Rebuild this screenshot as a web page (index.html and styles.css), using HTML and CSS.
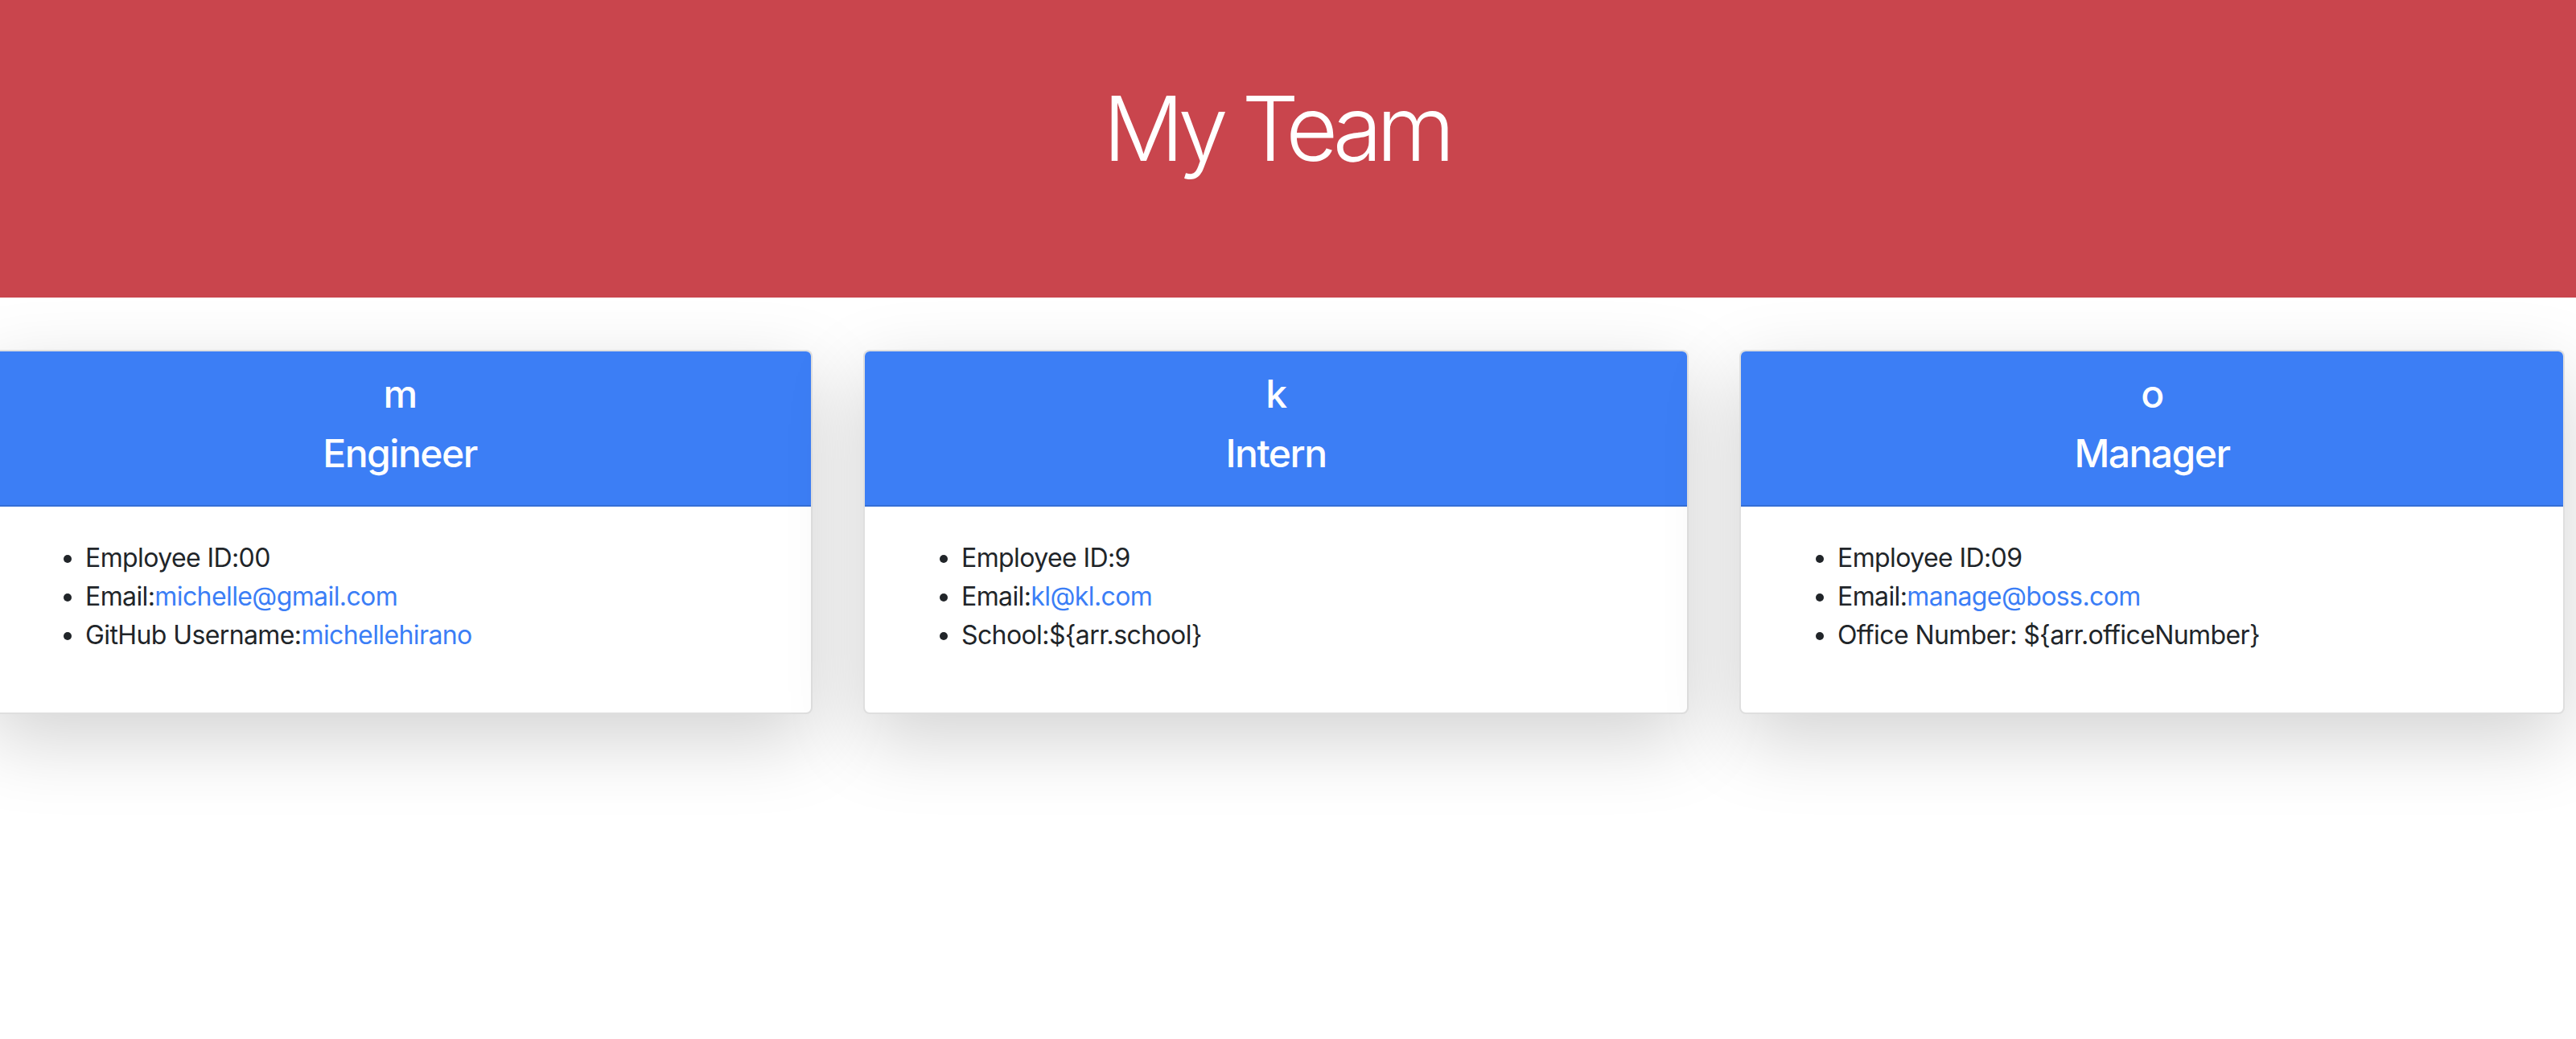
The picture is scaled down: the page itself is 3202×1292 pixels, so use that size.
FILE: index.html
```html
<!DOCTYPE html>
<html lang="en">
<head>
<meta charset="utf-8">
<title>My Team</title>
<link rel="stylesheet" href="styles.css">
</head>
<body>
<header class="jumbotron">
  <h1 class="title">My Team</h1>
</header>
<main class="team">
  <section class="card">
    <div class="card-header">
      <h4 class="name">m</h4>
      <h4 class="role">Engineer</h4>
    </div>
    <div class="card-body">
      <ul class="info">
        <li>Employee ID:00</li>
        <li>Email:<a href="#">michelle@gmail.com</a></li>
        <li>GitHub Username:<a href="#">michellehirano</a></li>
      </ul>
    </div>
  </section>
  <section class="card">
    <div class="card-header">
      <h4 class="name">k</h4>
      <h4 class="role">Intern</h4>
    </div>
    <div class="card-body">
      <ul class="info">
        <li>Employee ID:9</li>
        <li>Email:<a href="#">kl@kl.com</a></li>
        <li>School:${arr.school}</li>
      </ul>
    </div>
  </section>
  <section class="card">
    <div class="card-header">
      <h4 class="name">o</h4>
      <h4 class="role">Manager</h4>
    </div>
    <div class="card-body">
      <ul class="info">
        <li>Employee ID:09</li>
        <li>Email:<a href="#">manage@boss.com</a></li>
        <li>Office Number: ${arr.officeNumber}</li>
      </ul>
    </div>
  </section>
</main>
</body>
</html>
```
FILE: styles.css
```css
html {
  overflow: hidden;
}
body {
  margin: 0;
  padding: 0;
  background: #ffffff;
  font-family: Inter, "Noto Sans", "Liberation Sans", sans-serif;
  color: #212529;
  font-size: 32px;
  line-height: 1.5;
  min-height: 1292px;
}
.jumbotron {
  box-sizing: border-box;
  height: 370px;
  background: #c9454d;
  padding: 92px 30px 0 0;
  text-align: center;
}
.title {
  margin: 0;
  font-size: 112px;
  font-weight: 300;
  line-height: 1.2;
  color: #ffffff;
  letter-spacing: -7.5px;
}
.team {
  display: flex;
  gap: 63px;
  margin: 65px 0 0 -16px;
}
.card {
  flex: 0 0 1026px;
  box-sizing: border-box;
  background: #fff;
  border: 2px solid rgba(0,0,0,0.125);
  border-radius: 8px;
  box-shadow: 0 32px 96px rgba(0,0,0,0.175);
  overflow: hidden;
}
.card-header {
  background: #3c7ef5;
  border-bottom: 2px solid rgba(0,0,0,0.125);
  padding: 26px 40px 20px;
  text-align: center;
  color: #fff;
  margin: -2px -2px 0;
}
.card-header h4 {
  margin: 0 0 16px;
  font-size: 48px;
  font-weight: 500;
  line-height: 1.2;
  letter-spacing: -1.5px;
}
.card-body {
  padding: 40px;
}
.info {
  margin: 0 0 32px;
  padding-left: 80px;
  letter-spacing: -0.6px;
}
.info a {
  color: #3b7ef6;
  text-decoration: none;
}
```
